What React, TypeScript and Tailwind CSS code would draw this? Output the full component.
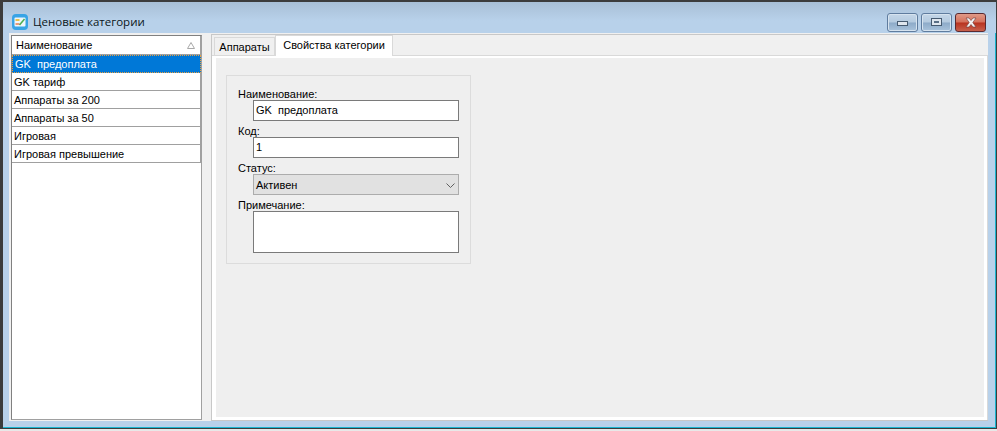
const rows = ['GK  предоплата', 'GK тариф', 'Аппараты за 200', 'Аппараты за 50', 'Игровая', 'Игровая превышение'];

const ui = { fontFamily: 'Tahoma, "Liberation Sans", sans-serif' };

function TitleIcon() {
  return (
    <svg width="16" height="16" viewBox="0 0 16 16" className="mr-[5px]">
      <rect x="0" y="0" width="16" height="16" rx="4" fill="#38a4e6" />
      <rect x="2.5" y="3.5" width="11" height="9" rx="1" fill="#eef6fb" />
      <rect x="3.5" y="5" width="4" height="2" fill="#e8c24a" />
      <rect x="3.5" y="9" width="4" height="2" fill="#e89a7a" />
      <path d="M7.5 11 L12.5 5" stroke="#4caf50" strokeWidth="1.5" />
    </svg>
  );
}

function CaptionButton({ kind }: { kind: 'min' | 'max' | 'close' }) {
  if (kind === 'close') {
    return (
      <div className="w-[31px] h-[19px] rounded-[3px] border border-[#5a2a30] bg-[linear-gradient(#e09a88_0%,#d4705c_48%,#b8321f_52%,#c8604c_100%)] flex items-center justify-center">
        <svg width="16" height="11" viewBox="0 0 16 11">
          <path d="M3 1 H6 L8 3.5 L10 1 H13 L9.8 5.5 L13 10 H10 L8 7.5 L6 10 H3 L6.2 5.5 Z" fill="#f4f2f2" stroke="#6b3a3a" strokeWidth="0.6" />
        </svg>
      </div>
    );
  }
  return (
    <div className="w-[31px] h-[19px] rounded-[3px] border border-[#5f7c9e] bg-[linear-gradient(#c4d6e8_0%,#b4cadf_48%,#8daac8_52%,#a9c3dc_100%)] flex items-center justify-center shadow-[inset_0_0_0_1px_#d6e3ef]">
      {kind === 'min'
        ? <div className="w-[11px] h-[5px] mt-[3px] bg-[#dfe6ee] border border-[#465a70]" />
        : <div className="w-[11px] h-[8px] bg-[#dfe6ee] border border-[#465a70] flex items-center justify-center"><div className="w-[5px] h-[2px] bg-[#5a6f86]" /></div>}
    </div>
  );
}

function Field({ label, children }: { label: string; children: React.ReactNode }) {
  return (
    <div>
      <div className="h-[13px] leading-[17px] mb-[1px]">{label}</div>
      <div className="ml-[15px]">{children}</div>
    </div>
  );
}

export default function App() {
  return (
    <div className="w-[997px] h-[431px] overflow-hidden bg-[#e8e8e8] text-[11px] text-black" style={ui}>
      <div className="h-[429px] border-[3px] border-[#3c3c3c] border-r-[1px] border-t-[2px] border-b-[1px] bg-[#b8d1ea] flex flex-col shadow-[inset_-1px_-1px_0_#19b5d0]">
        <div className="h-[31px] flex items-center pl-[9px] pr-[10px] pt-[9px] shrink-0 bg-[linear-gradient(#a8bfd6,#b8d1ea_60%)]">
          <TitleIcon />
          <span className="text-[11.5px] text-[#0a1620]" style={{ fontFamily: '"Open Sans", sans-serif' }}>Ценовые категории</span>
          <div className="ml-auto flex gap-[3px]">
            <CaptionButton kind="min" />
            <CaptionButton kind="max" />
            <CaptionButton kind="close" />
          </div>
        </div>
        <div className="flex-1 ml-[6px] mr-[8px] mb-[7px] bg-[#f0f0f0] flex min-h-0">
          <div className="w-[191px] ml-[2px] mt-[2px] mb-[1px] border border-[#a0a0a0] border-t-[#808080] border-l-[#808080] bg-white shrink-0">
            <div className="h-[19px] flex items-center pl-[4px] border-b border-r border-[#a0a0a0] w-[189px]">
              <span>Наименование</span>
              <svg width="8" height="7" viewBox="0 0 8 7" className="ml-auto mr-[5px]"><path d="M4 0.5 L7.5 6.5 H0.5 Z" fill="none" stroke="#a8a8a8" /></svg>
            </div>
            {rows.map((r, i) => (
              <div
                key={r}
                className={i === 0
                  ? 'h-[18px] w-[189px] leading-[16px] px-[2px] bg-[#0078d7] text-white border border-dotted border-[#e8a040]'
                  : 'h-[18px] w-[189px] leading-[18px] px-[2px] border-b border-r border-[#a0a0a0]'}
              >
                <span className="whitespace-pre">{r}</span>
              </div>
            ))}
          </div>
          <div className="flex-1 ml-[9px] mt-[1px] flex flex-col border-l border-t border-b border-[#c8c8c8]">
            <div className="h-[20px] flex items-end pl-[2px] shrink-0 relative z-10">
              <div className="h-[18px] w-[61px] border border-b-0 border-[#d9d9d9] bg-[#f0f0f0] text-center leading-[19px]">Аппараты</div>
              <div className="h-[21px] w-[118px] mb-[-1px] border border-b-0 border-[#d9d9d9] bg-white text-center leading-[19px]">Свойства категории</div>
            </div>
            <div className="flex-1 border-t border-r border-[#d9d9d9] bg-white pt-[2px] pl-[4px] pr-[3px] pb-[3px] min-h-0">
              <div className="h-full bg-[#efefef] pt-[17px] pl-[10px]">
                <div className="w-[245px] h-[189px] border border-[#dcdcdc] pl-[11px] pt-[10px] flex flex-col gap-[2px]">
                  <Field label="Наименование:">
                    <div className="w-[206px] h-[21px] border border-[#7a7a7a] bg-white px-[2px] leading-[19px] whitespace-pre">GK  предоплата</div>
                  </Field>
                  <Field label="Код:">
                    <div className="w-[206px] h-[21px] border border-[#7a7a7a] bg-white px-[2px] leading-[19px]">1</div>
                  </Field>
                  <Field label="Статус:">
                    <div className="w-[206px] h-[21px] border border-[#acacac] bg-[#e1e1e1] px-[2px] pt-[1px] flex items-center">
                      <span>Активен</span>
                      <svg width="9" height="5" viewBox="0 0 9 5" className="ml-auto mr-[1px]"><path d="M0.5 0.5 L4.5 4.5 L8.5 0.5" fill="none" stroke="#606060" /></svg>
                    </div>
                  </Field>
                  <Field label="Примечание:">
                    <div className="w-[206px] h-[42px] border border-[#7a7a7a] bg-white" />
                  </Field>
                </div>
              </div>
            </div>
          </div>
        </div>
      </div>
    </div>
  );
}
